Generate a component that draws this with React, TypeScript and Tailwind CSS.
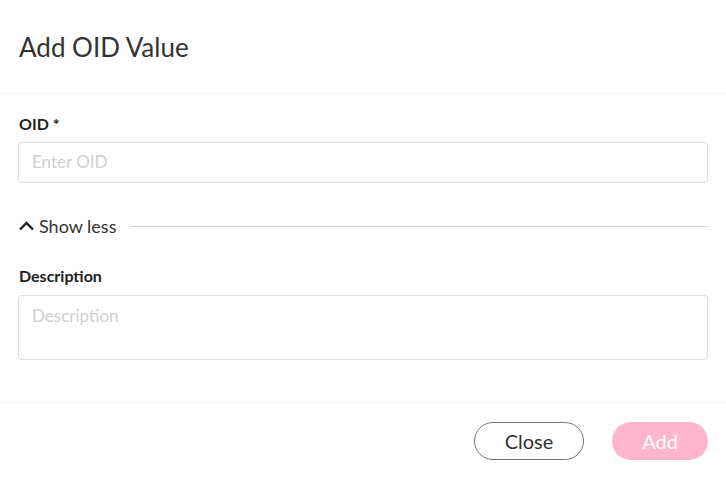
export default function App() {
  return (
    <div className="flex h-[478px] w-[726px] flex-col bg-white font-['Source_Sans_Pro','Lato','Liberation_Sans',sans-serif] text-[#333]">
      <div className="flex h-[94px] items-center border-b border-[#f0f0f0] px-[19px]">
        <h2 className="text-[26px] leading-none text-[#333]">Add OID Value</h2>
      </div>
      <div className="flex flex-col px-[18px] pt-[22px]">
        <label className="pl-px text-[16px] font-bold leading-none text-[#222]">OID *</label>
        <input
          className="mt-[10px] h-[41px] rounded-[4px] border border-[#dcdcdc] px-[13px] pb-[2px] text-[17px] placeholder:text-[#cfcfcf] outline-none"
          placeholder="Enter OID"
        />
        <div className="mt-[34px] flex items-center">
          <button type="button" className="flex items-center gap-[4px] text-[18px] leading-none text-[#333]">
            <svg width="17" height="16" viewBox="0 0 17 16" fill="none" stroke="#222" strokeWidth="2.4">
              <path d="M2 11.5L8.5 5L15 11.5" />
            </svg>
            Show less
          </button>
          <div className="ml-[14px] h-px flex-1 bg-[#d3d6de]" />
        </div>
        <label className="mt-[33px] pl-px text-[16px] font-bold leading-none text-[#222]">Description</label>
        <textarea
          className="mt-[11px] h-[65px] resize-none rounded-[4px] border border-[#dcdcdc] px-[13px] py-[7px] text-[17px] placeholder:text-[#cfcfcf] outline-none"
          placeholder="Description"
        />
      </div>
      <div className="mt-auto flex h-[76px] items-center justify-end gap-[28px] border-t border-[#f0f0f0] px-[18px]">
        <button type="button" className="h-[38px] w-[110px] rounded-full border border-[#777] text-[20px] text-[#333]">
          Close
        </button>
        <button type="button" className="h-[38px] w-[96px] rounded-full bg-[#ffb5ce] text-[20px] text-white">
          Add
        </button>
      </div>
    </div>
  );
}
